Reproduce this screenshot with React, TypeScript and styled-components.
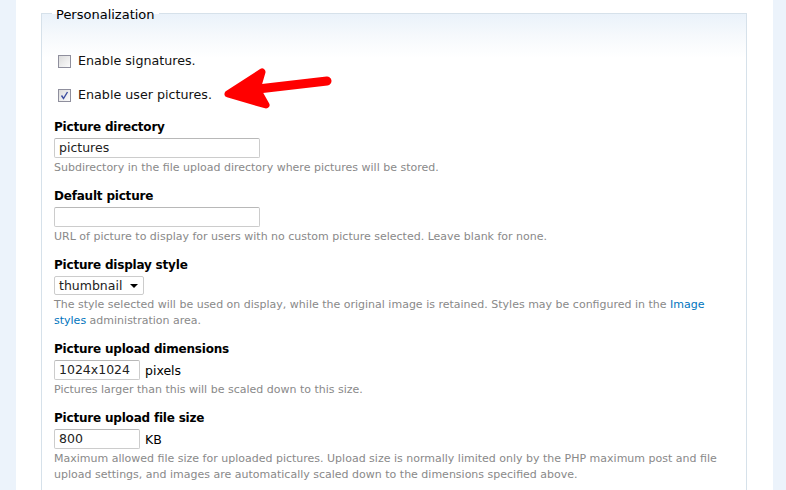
import React from "react";
import styled, { createGlobalStyle } from "styled-components";

const Global = createGlobalStyle`
  html, body { margin: 0; padding: 0; background: #fff; }
  body { font-family: "DejaVu Sans", Verdana, sans-serif; color: #000; }
`;

const Page = styled.div`
  position: relative;
  display: grid;
  grid-template-columns: 16px 1fr 13px;
  width: 786px;
  height: 490px;
  overflow: hidden;
`;

const SideStrip = styled.div`
  background: #ecf3fb;
`;

const Main = styled.div`
  padding: 0 26px 0 25px;
`;

const FieldSet = styled.fieldset`
  margin: 3px 0 0 0;
  padding: 29px 10px 40px 10px;
  border: 1px solid #d6e1ea;
  border-bottom: none;
  background: linear-gradient(#eaf2fa 0px, #f6f9fc 22px, #ffffff 44px);
  min-inline-size: 0;
`;

const Legend = styled.legend`
  padding: 4px 4px 0 4px;
  font-size: 13px;
  line-height: 16px;
  color: #000;
`;

const CheckRow = styled.label<{ $gap: number }>`
  display: flex;
  align-items: center;
  gap: 7px;
  height: 18px;
  margin: 0 0 ${(p) => p.$gap}px 6px;
  font-size: 12.7px;
  line-height: 18px;
  color: #111;
`;

const Box = styled.span`
  width: 11px;
  height: 11px;
  border: 1px solid #8f8f9d;
  background: linear-gradient(135deg, #dcdcdc, #fbfbfb);
  display: inline-flex;
  align-items: center;
  justify-content: center;
`;

const FormItem = styled.div`
  margin: 0 0 11px 2px;
`;

const Label = styled.div`
  font-size: 12px;
  font-weight: bold;
  letter-spacing: -0.2px;
  line-height: 18px;
  margin-bottom: 2px;
`;

const InputRow = styled.div`
  display: flex;
  align-items: center;
  gap: 5px;
  font-size: 12.5px;
`;

const TextBox = styled.div<{ $w: number }>`
  box-sizing: border-box;
  width: ${(p) => p.$w}px;
  height: 20px;
  border: 1px solid #ccc;
  border-top-color: #b8b8b8;
  border-radius: 2px;
  padding: 0 4px;
  font-size: 12.5px;
  line-height: 18px;
  color: #222;
`;

const Select = styled.div`
  box-sizing: border-box;
  width: 90px;
  height: 19px;
  margin-top: 1px;
  border: 1px solid #ccc;
  border-radius: 2px;
  padding: 0 4px;
  display: flex;
  align-items: center;
  justify-content: space-between;
  font-size: 12.5px;
  line-height: 16px;
  color: #222;
`;

const Caret = styled.span`
  width: 0;
  height: 0;
  border-left: 4px solid transparent;
  border-right: 4px solid transparent;
  border-top: 4px solid #000;
  margin-right: 1px;
`;

const Desc = styled.div`
  margin-top: 2px;
  font-size: 11px;
  line-height: 16px;
  color: #898989;
  max-width: 682px;
`;

const Link = styled.a`
  color: #0074bd;
  text-decoration: none;
`;

const Arrow = styled.svg`
  position: absolute;
  left: 0;
  top: 0;
  pointer-events: none;
`;

const Check = () => (
  <svg width="9" height="9" viewBox="0 0 9 9">
    <path d="M1.5 4.5 L3.5 7.5 L7.5 1" fill="none" stroke="#3c4ea0" strokeWidth="1.4" />
  </svg>
);

export default function App() {
  return (
    <>
      <Global />
      <Page>
        <SideStrip />
        <Main>
          <FieldSet>
            <Legend>Personalization</Legend>
            <CheckRow $gap={16}>
              <Box />
              Enable signatures.
            </CheckRow>
            <CheckRow $gap={14}>
              <Box>
                <Check />
              </Box>
              Enable user pictures.
            </CheckRow>

            <FormItem>
              <Label>Picture directory</Label>
              <InputRow>
                <TextBox $w={206}>pictures</TextBox>
              </InputRow>
              <Desc>Subdirectory in the file upload directory where pictures will be stored.</Desc>
            </FormItem>

            <FormItem>
              <Label>Default picture</Label>
              <InputRow>
                <TextBox $w={206} />
              </InputRow>
              <Desc>URL of picture to display for users with no custom picture selected. Leave blank for none.</Desc>
            </FormItem>

            <FormItem>
              <Label>Picture display style</Label>
              <Select>
                thumbnail
                <Caret />
              </Select>
              <Desc>
                The style selected will be used on display, while the original image is retained. Styles may be
                configured in the <Link href="#">Image styles</Link> administration area.
              </Desc>
            </FormItem>

            <FormItem>
              <Label>Picture upload dimensions</Label>
              <InputRow>
                <TextBox $w={86}>1024x1024</TextBox>
                pixels
              </InputRow>
              <Desc>Pictures larger than this will be scaled down to this size.</Desc>
            </FormItem>

            <FormItem>
              <Label>Picture upload file size</Label>
              <InputRow>
                <TextBox $w={86}>800</TextBox>
                KB
              </InputRow>
              <Desc>
                Maximum allowed file size for uploaded pictures. Upload size is normally limited only by the PHP
                maximum post and file upload settings, and images are automatically scaled down to the dimensions
                specified above.
              </Desc>
            </FormItem>
          </FieldSet>
        </Main>
        <SideStrip />
        <Arrow width="786" height="490" viewBox="0 0 786 490">
          <line x1="327" y1="81" x2="258" y2="89" stroke="#ff0000" strokeWidth="9" strokeLinecap="round" />
          <path
            d="M228 94 L262 72 L257 89 L266 105 Z"
            fill="#ff0000"
            stroke="#ff0000"
            strokeWidth="7"
            strokeLinejoin="round"
          />
        </Arrow>
      </Page>
    </>
  );
}
